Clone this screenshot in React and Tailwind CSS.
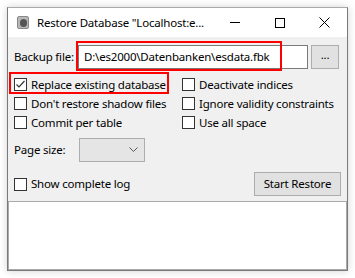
import React from "react";

function Check({ checked, label }) {
  return (
    <div className="flex items-center gap-[4px] h-[19px] whitespace-nowrap">
      <div className="w-[13px] h-[13px] shrink-0 border border-[#333] bg-white flex items-center justify-center">
        {checked && (
          <svg width="11" height="11" viewBox="0 0 11 11">
            <path d="M1.5 5.5 L4 8 L9.5 2" stroke="#333" strokeWidth="1.2" fill="none" />
          </svg>
        )}
      </div>
      <span>{label}</span>
    </div>
  );
}

export default function App() {
  return (
    <div
      className="w-[355px] h-[278px] bg-white relative text-[11.5px] text-black tracking-[-0.2px]"
      style={{ fontFamily: '"Noto Sans", "Liberation Sans", sans-serif' }}
    >
      <div className="absolute left-[7px] top-[7px] w-[341px] h-[264px] border border-[#7a7a7a] border-t-[#aaa] shadow-[0_0_8px_rgba(0,0,0,0.18)] flex flex-col bg-[#f0f0f0]">
        {/* title bar */}
        <div className="h-[29px] bg-white flex items-center whitespace-nowrap">
          <div className="ml-[9px] w-[12px] h-[13px] shrink-0 rounded-[2px] bg-[#b8b8b8] border border-[#888] flex items-center justify-center">
            <div className="w-[7px] h-[8px] rounded-full bg-[#555]" />
          </div>
          <span className="ml-[8px] leading-none">Restore Database "Localhost:e...</span>
          <div className="ml-auto flex items-center shrink-0">
            <div className="w-[45px] flex justify-center">
              <div className="w-[10px] h-px bg-black" />
            </div>
            <div className="w-[45px] flex justify-center">
              <div className="w-[10px] h-[10px] border border-black" />
            </div>
            <div className="w-[45px] flex justify-center">
              <svg width="11" height="11" viewBox="0 0 11 11">
                <path d="M0.5 0.5 L10.5 10.5 M10.5 0.5 L0.5 10.5" stroke="#000" strokeWidth="1" />
              </svg>
            </div>
          </div>
        </div>

        {/* content */}
        <div className="flex-1 flex flex-col px-[6px] pt-[8px]">
          <div className="flex items-center h-[24px] whitespace-nowrap">
            <span className="w-[64px] shrink-0">Backup file:</span>
            <div className="w-[230px] shrink-0 h-[24px] bg-white border border-[#7a7a7a] flex items-center pl-[5px] overflow-hidden">
              D:\es2000\Datenbanken\esdata.fbk
            </div>
            <div className="ml-[3px] w-[28px] shrink-0 h-[24px] bg-[#e1e1e1] border border-[#adadad] flex items-center justify-center leading-none pb-[4px]">
              ...
            </div>
          </div>

          <div className="grid grid-cols-[168px_1fr] mt-[6px]">
            <div className="flex flex-col">
              <Check checked label="Replace existing database" />
              <Check label="Don't restore shadow files" />
              <Check label="Commit per table" />
            </div>
            <div className="flex flex-col">
              <Check label="Deactivate indices" />
              <Check label="Ignore validity constraints" />
              <Check label="Use all space" />
            </div>
          </div>

          <div className="flex items-center mt-[6px] whitespace-nowrap">
            <span className="w-[65px] shrink-0">Page size:</span>
            <div className="w-[66px] h-[24px] bg-[#e5e5e5] border border-[#adadad] flex items-center justify-end pr-[6px]">
              <svg width="9" height="6" viewBox="0 0 9 6">
                <path d="M0.5 0.5 L4.5 4.5 L8.5 0.5" stroke="#555" strokeWidth="1" fill="none" />
              </svg>
            </div>
          </div>

          <div className="flex items-center justify-between mt-[10px]">
            <Check label="Show complete log" />
            <div className="w-[87px] h-[24px] bg-[#e1e1e1] border border-[#adadad] flex items-center justify-center whitespace-nowrap">
              Start Restore
            </div>
          </div>
        </div>

        <div className="h-[69px] bg-white border border-[#aaa]" />

        {/* annotations */}
        <div className="absolute left-[68px] top-[33px] w-[206px] h-[30px] border-2 border-[#ff0000] pointer-events-none" />
        <div className="absolute left-[1px] top-[64px] w-[160px] h-[22px] border-2 border-[#ff0000] pointer-events-none" />
      </div>
    </div>
  );
}
